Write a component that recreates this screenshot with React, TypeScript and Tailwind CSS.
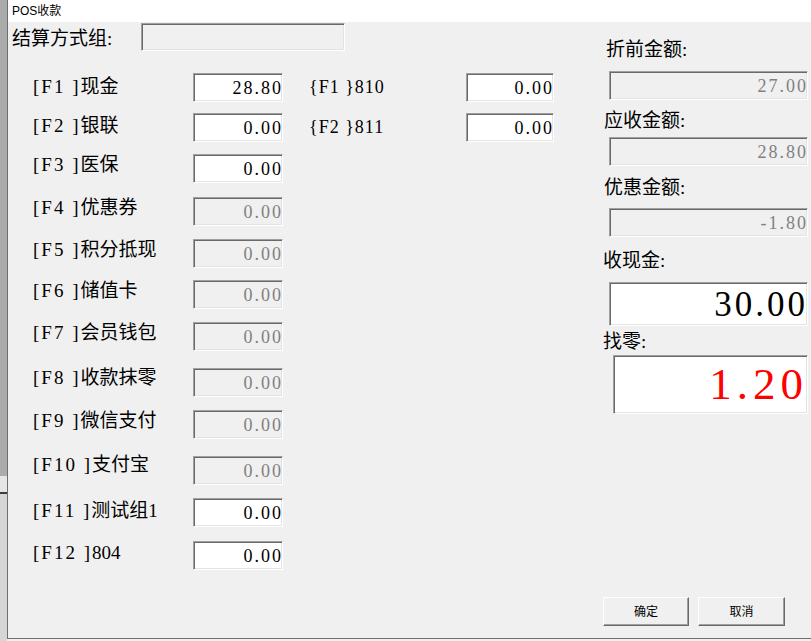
import React from "react"

const serif = "font-['Liberation_Serif','Noto_Sans_CJK_SC',serif]"
const sans = "font-['Liberation_Sans','Noto_Sans_CJK_SC',sans-serif]"

interface PayRow {
  key: string
  name: string
  value: string
  enabled: boolean
  mt: string
  lift: string
}

const payRows: PayRow[] = [
  { key: "F1", name: "现金", value: "28.80", enabled: true, mt: "mt-[22px]", lift: "pb-[1px]" },
  { key: "F2", name: "银联", value: "0.00", enabled: true, mt: "mt-[11px]", lift: "pb-[3px]" },
  { key: "F3", name: "医保", value: "0.00", enabled: true, mt: "mt-[12px]", lift: "pb-[6px]" },
  { key: "F4", name: "优惠券", value: "0.00", enabled: false, mt: "mt-[14px]", lift: "pb-[6px]" },
  { key: "F5", name: "积分抵现", value: "0.00", enabled: false, mt: "mt-[13px]", lift: "pb-[6px]" },
  { key: "F6", name: "储值卡", value: "0.00", enabled: false, mt: "mt-[12px]", lift: "pb-[6px]" },
  { key: "F7", name: "会员钱包", value: "0.00", enabled: false, mt: "mt-[13px]", lift: "pb-[7px]" },
  { key: "F8", name: "收款抹零", value: "0.00", enabled: false, mt: "mt-[17px]", lift: "pb-[8px]" },
  { key: "F9", name: "微信支付", value: "0.00", enabled: false, mt: "mt-[13px]", lift: "pb-[6px]" },
  { key: "F10", name: "支付宝", value: "0.00", enabled: false, mt: "mt-[17px]", lift: "pb-[10px]" },
  { key: "F11", name: "测试组1", value: "0.00", enabled: true, mt: "mt-[13px]", lift: "pb-[3px]" },
  { key: "F12", name: "804", value: "0.00", enabled: true, mt: "mt-[14px]", lift: "pb-[5px]" },
]

const extraRows = [
  { key: "F1", name: "810", value: "0.00", mt: "mt-[22px]" },
  { key: "F2", name: "811", value: "0.00", mt: "mt-[11px]" },
]

function Field({
  value = "",
  disabled = false,
  className = "",
  textClass = "text-[18px] tracking-[2px]",
  color,
}: {
  value?: string
  disabled?: boolean
  className?: string
  textClass?: string
  color?: string
}) {
  const tone = color ?? (disabled ? "text-[#808080]" : "text-black")
  return (
    <div
      className={`flex items-center justify-end overflow-hidden border border-t-[#a0a0a0] border-l-[#a0a0a0] border-r-white border-b-white shadow-[inset_1px_1px_0_#696969,inset_-1px_-1px_0_#e3e3e3] ${
        disabled ? "bg-[#f0f0f0]" : "bg-white"
      } ${className}`}
    >
      <span className={`${serif} ${textClass} ${tone} leading-none mr-[-1px] whitespace-nowrap`}>
        {value}
      </span>
    </div>
  )
}

function Button({ label }: { label: string }) {
  return (
    <div
      className={`flex items-center justify-center h-[29px] bg-[#f0f0f0] border border-t-white border-l-white border-r-[#696969] border-b-[#696969] shadow-[inset_-1px_-1px_0_#a0a0a0] ${sans} text-[12px] text-black`}
    >
      {label}
    </div>
  )
}

export default function App() {
  return (
    <div className="w-[811px] h-[641px] flex items-start bg-[#f0f0f0] overflow-hidden">
      {/* background window edge */}
      <div className="w-[7px] h-full flex flex-col shrink-0">
        <div className="h-[476px] bg-[#ababab]" />
        <div className="h-[16px] bg-[#e6e6e6]" />
        <div className="h-[2px] bg-[#3c3c3c]" />
        <div className="flex-1 bg-[#d6d6d6]" />
      </div>

      {/* dialog */}
      <div className="w-[804px] h-[639px] flex flex-col border-l border-b border-[#6e6e6e] shrink-0">
        <div className={`h-[22px] bg-white flex items-center pl-[4px] ${sans} text-[12px] text-black`}>
          POS收款
        </div>

        <div className="flex-1 flex bg-[#f0f0f0]">
          {/* left + middle */}
          <div className="w-[546px] flex flex-col shrink-0">
            <div className="flex items-center mt-[1px] h-[28px] pl-[4px]">
              <span className={`w-[129px] pt-[5px] ${serif} text-[19px] text-black`}>
                结算方式组:
              </span>
              <Field disabled className="w-[204px] h-[28px]" />
            </div>

            <div className="flex">
              <div className="flex flex-col pl-[25px]">
                {payRows.map((r) => (
                  <div key={r.key} className={`flex items-center h-[29px] ${r.mt}`}>
                    <span className={`w-[160px] ${r.lift} ${serif} text-[19px] text-black whitespace-pre`}>
                      <span className="tracking-[2px]">[{r.key} ]</span>
                      {r.name}
                    </span>
                    <Field
                      value={r.value}
                      disabled={!r.enabled}
                      className="w-[90px] h-[29px]"
                    />
                  </div>
                ))}
              </div>

              <div className="flex flex-col ml-[26px]">
                {extraRows.map((r) => (
                  <div key={r.key} className={`flex items-center h-[29px] ${r.mt}`}>
                    <span className={`w-[157px] pb-[1px] ${serif} text-[18px] text-black whitespace-pre tracking-[1px]`}>
                      {"{"}
                      {r.key} {"}"}
                      {r.name}
                    </span>
                    <Field value={r.value} className="w-[88px] h-[29px]" />
                  </div>
                ))}
              </div>
            </div>
          </div>

          {/* totals */}
          <div className="flex flex-col ml-[50px] w-[207px] shrink-0">
            <span className={`mt-[17px] h-[22px] ml-[2px] ${serif} text-[19px] text-black leading-[22px]`}>
              折前金额:
            </span>
            <Field value="27.00" disabled className="mt-[10px] ml-[5px] w-[199px] h-[29px]" />

            <span className={`mt-[10px] h-[22px] ${serif} text-[19px] text-black leading-[22px]`}>
              应收金额:
            </span>
            <Field value="28.80" disabled className="mt-[5px] ml-[5px] w-[199px] h-[29px]" />

            <span className={`mt-[11px] h-[22px] ${serif} text-[19px] text-black leading-[22px]`}>
              优惠金额:
            </span>
            <Field value="-1.80" disabled className="mt-[9px] ml-[5px] w-[199px] h-[29px]" />

            <span className={`mt-[13px] h-[22px] ml-[-1px] ${serif} text-[19px] text-black leading-[22px]`}>
              收现金:
            </span>
            <Field
              value="30.00"
              className="mt-[10px] ml-[5px] w-[199px] h-[44px]"
              textClass="text-[35px] tracking-[3px]"
            />

            <span className={`mt-[5px] h-[22px] ml-[-1px] ${serif} text-[19px] text-black leading-[22px]`}>
              找零:
            </span>
            <Field
              value="1.20"
              className="mt-[2px] ml-[9px] w-[195px] h-[59px]"
              textClass="text-[45px] tracking-[5px]"
              color="text-[#ff0000]"
            />

            <div className="mt-auto mb-[12px] flex gap-[9px] ml-[-1px]">
              <div className="w-[86px]">
                <Button label="确定" />
              </div>
              <div className="w-[87px]">
                <Button label="取消" />
              </div>
            </div>
          </div>
        </div>
      </div>
    </div>
  )
}
